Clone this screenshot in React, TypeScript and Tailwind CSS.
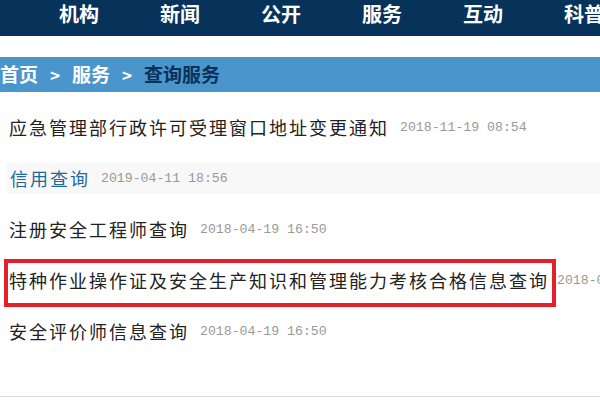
import React from "react";

type Item = {
  title: string;
  date: string;
  active?: boolean;
  marked?: boolean;
};

const navItems = ["机构", "新闻", "公开", "服务", "互动", "科普"];

const items: Item[] = [
  { title: "应急管理部行政许可受理窗口地址变更通知", date: "2018-11-19 08:54" },
  { title: "信用查询", date: "2019-04-11 18:56", active: true },
  { title: "注册安全工程师查询", date: "2018-04-19 16:50" },
  {
    title: "特种作业操作证及安全生产知识和管理能力考核合格信息查询",
    date: "2018-04-19 16:50",
    marked: true,
  },
  { title: "安全评价师信息查询", date: "2018-04-19 16:50" },
];

const cjk = { fontFamily: '"Noto Sans CJK SC", "Noto Sans", sans-serif' };

export default function App() {
  return (
    <div className="flex h-[400px] w-[600px] flex-col overflow-hidden bg-white" style={cjk}>
      {/* top nav */}
      <div className="flex h-9 shrink-0 items-start gap-[61px] bg-[#07325a] pl-[59px] whitespace-nowrap">
        {navItems.map((n) => (
          <span key={n} className="text-[20px] leading-[28px] font-bold text-white">
            {n}
          </span>
        ))}
      </div>

      {/* breadcrumb */}
      <div className="mt-[21px] flex h-[35px] shrink-0 items-center bg-[#4b95cd] text-[19px] font-bold whitespace-nowrap">
        <span className="text-white">首页</span>
        <span className="mx-[12px] text-[17px] text-white">&gt;</span>
        <span className="text-white">服务</span>
        <span className="mx-[12px] text-[17px] text-white">&gt;</span>
        <span className="text-[#0a3158]">查询服务</span>
      </div>

      {/* list */}
      <ul className="mt-[20px] flex flex-1 flex-col gap-[20px]">
        {items.map((it) => (
          <li
            key={it.title}
            className={
              "flex h-[31px] items-center whitespace-nowrap " +
              (it.active ? "ml-[7px] bg-[#f8f8f8] pl-[3px]" : "pl-[9px]")
            }
          >
            <span
              className={
                "relative text-[18px] tracking-[2px] " +
                (it.active ? "text-[#1f6a9c]" : "text-[#222]")
              }
            >
              {it.title}
              {it.marked && (
                <span className="pointer-events-none absolute -top-[8px] -right-[7px] -bottom-[13px] -left-[5px] border-[4px] border-[#e2212b]" />
              )}
            </span>
            <span
              className={
                "text-[13.2px] text-[#999] " + (it.marked ? "ml-[8px]" : "ml-[11px]")
              }
              style={{ fontFamily: '"Liberation Mono", monospace' }}
            >
              {it.date}
            </span>
          </li>
        ))}
      </ul>

      <div className="h-px shrink-0 bg-[#d9d9d9]" />
      <div className="h-[3px] shrink-0" />
    </div>
  );
}
